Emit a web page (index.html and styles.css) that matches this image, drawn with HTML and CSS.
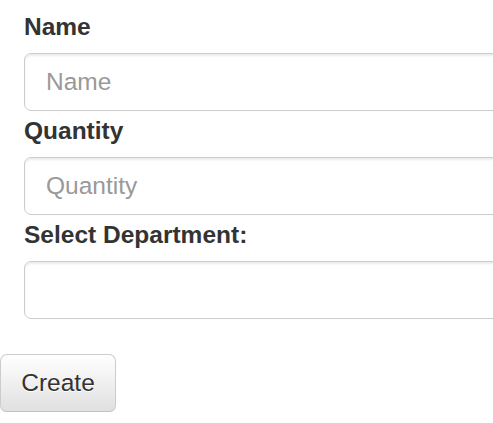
FILE: index.html
```html
<!DOCTYPE html>
<html>
<head>
<meta charset="utf-8">
<link rel="stylesheet" href="styles.css">
</head>
<body>
<form class="form">
  <div class="fields">
    <label class="label" for="name">Name</label>
    <input class="control" id="name" type="text" placeholder="Name">
    <label class="label" for="qty">Quantity</label>
    <input class="control" id="qty" type="text" placeholder="Quantity">
    <label class="label" for="dept">Select Department:</label>
    <select class="control select" id="dept"></select>
  </div>
  <button class="btn" type="button">Create</button>
</form>
</body>
</html>
```
FILE: styles.css
```css
html, body {
  margin: 0;
  padding: 0;
  background: #fff;
  overflow: hidden;
}
body {
  font-family: "Liberation Sans", Arial, sans-serif;
  color: #333;
}
.form {
  padding-top: 7px;
  overflow: hidden;
}
.fields {
  display: flex;
  flex-direction: column;
  align-items: flex-start;
  padding-left: 24px;
  overflow: hidden;
}
.label {
  display: block;
  font-weight: bold;
  font-size: 24.5px;
  line-height: 34px;
  margin: 3px 0 9px;
}
.control {
  box-sizing: border-box;
  width: calc(100% + 12px);
  height: 58px;
  padding: 0 21px;
  font-family: "Liberation Sans", Arial, sans-serif;
  font-size: 24.5px;
  color: #555;
  background: #fff;
  border: 1px solid #ccc;
  border-radius: 7px;
  box-shadow: inset 0 2px 2px rgba(0, 0, 0, 0.075);
  outline: none;
}
.control::placeholder {
  color: #999;
}
.select {
  appearance: none;
  -webkit-appearance: none;
}
.btn {
  display: block;
  box-sizing: border-box;
  margin-top: 35px;
  width: 116px;
  height: 58px;
  padding: 0;
  font-family: "Liberation Sans", Arial, sans-serif;
  font-size: 24.5px;
  color: #333;
  text-shadow: 0 1px 0 #fff;
  background: linear-gradient(to bottom, #fff 0%, #e0e0e0 100%);
  border: 1px solid #ccc;
  border-bottom-color: #c2c2c2;
  border-radius: 7px;
  box-shadow: inset 0 1px 0 rgba(255, 255, 255, 0.15), 0 1px 1px rgba(0, 0, 0, 0.075);
}
```
